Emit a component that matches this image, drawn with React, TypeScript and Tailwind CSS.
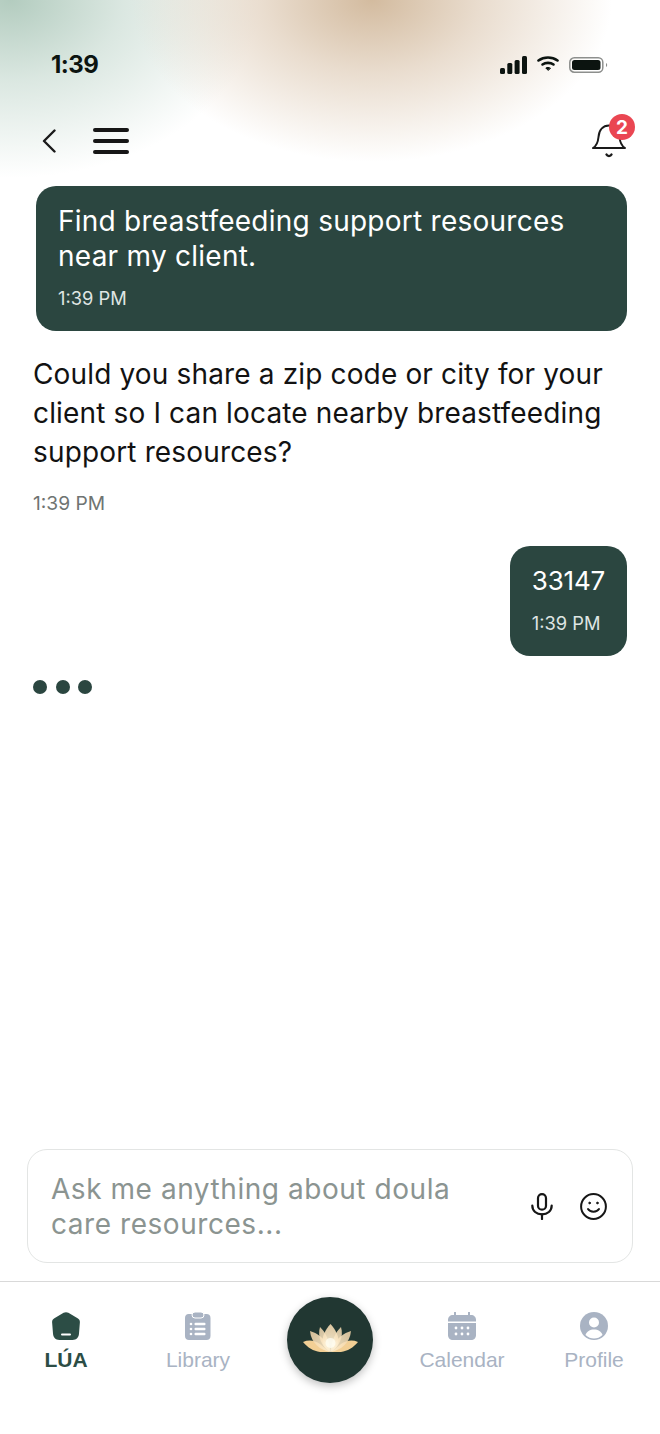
import React from 'react';

const LotusIcon = () => (
  <svg viewBox="0 0 55 28" className="h-[28px] w-[55px]">
    <defs>
      <radialGradient id="petal" gradientUnits="userSpaceOnUse" cx="27.5" cy="20" r="22">
        <stop offset="0%" stopColor="#fffbe9" />
        <stop offset="40%" stopColor="#fbe6c2" />
        <stop offset="100%" stopColor="#eed2a8" />
      </radialGradient>
    </defs>
    <path d="M0 18C6 15.5 12 16.5 17 20C20.5 23 24 26.5 27.5 28C16 29.5 7 26.5 0 18Z" fill="#f2cf95" />
    <path d="M55 18C49 15.5 43 16.5 38 20C34.5 23 31 26.5 27.5 28C39 29.5 48 26.5 55 18Z" fill="#f2cf95" />
    <path d="M7 7C14 9 21 14 25 22L27 28C17 26 8 19 7 7Z" fill="url(#petal)" opacity="0.88" />
    <path d="M48 7C41 9 34 14 30 22L28 28C38 26 47 19 48 7Z" fill="url(#petal)" opacity="0.88" />
    <path d="M17 3C22 8 26 14 27.5 28C19 23 14 13 17 3Z" fill="url(#petal)" opacity="0.85" />
    <path d="M38 3C33 8 29 14 27.5 28C36 23 41 13 38 3Z" fill="url(#petal)" opacity="0.85" />
    <path d="M27.5 0C33 6 35.5 12 35.5 17C35.5 22 32 25.5 27.5 28C23 25.5 19.5 22 19.5 17C19.5 12 22 6 27.5 0Z" fill="url(#petal)" opacity="0.9" />
    <circle cx="27.5" cy="19" r="5" fill="#fffdf0" opacity="0.8" />
  </svg>
);

const LuaIcon = () => (
  <svg viewBox="0 0 28 28" className="h-7 w-7">
    <path d="M11.6 0.8C13 -0.1 15 -0.1 16.4 0.8L25.6 6.3C27.1 7.2 28 8.6 27.9 10.3L27 21.6C26.7 25.5 24.5 28 20.6 28H7.4C3.5 28 1.3 25.5 1 21.6L0.1 10.3C0 8.6 0.9 7.2 2.4 6.3Z" fill="#2c4d45" />
    <rect x="9" y="21.5" width="10" height="2" rx="1" fill="#fff" />
  </svg>
);

const LibraryIcon = () => (
  <svg viewBox="0 0 26 28" className="h-7 w-[26px]">
    <path d="M3.5 2H21.5C24 2 25.5 3.5 25.5 6V24C25.5 26.5 24 28 21.5 28H4C1.5 28 0 26.5 0 24V6C0 3.5 1.5 2 3.5 2Z" fill="#a9b3c3" />
    <rect x="7" y="0" width="12" height="6" rx="3" fill="#a9b3c3" stroke="#fff" strokeWidth="1" />
    <g fill="#fff">
      <circle cx="6" cy="12" r="1.3" />
      <circle cx="6" cy="17" r="1.3" />
      <circle cx="6" cy="22" r="1.3" />
      <rect x="9.5" y="10.8" width="11" height="2.4" rx="1" />
      <rect x="9.5" y="15.8" width="11" height="2.4" rx="1" />
      <rect x="9.5" y="20.8" width="11" height="2.4" rx="1" />
    </g>
  </svg>
);

const CalendarIcon = () => (
  <svg viewBox="0 0 28 28" className="h-7 w-7">
    <path d="M7 0.5V4M21 0.5V4" stroke="#a9b3c3" strokeWidth="2" strokeLinecap="round" />
    <path d="M5 3H23C26 3 28 5 28 8V9.5H0V8C0 5 2 3 5 3Z" fill="#a9b3c3" />
    <path d="M0 11H28V23C28 26 26 28 23 28H5C2 28 0 26 0 23Z" fill="#a9b3c3" />
    <g fill="#fff">
      <circle cx="8" cy="16" r="1.4" />
      <circle cx="14" cy="16" r="1.4" />
      <circle cx="20" cy="16" r="1.4" />
      <circle cx="8" cy="22" r="1.4" />
      <circle cx="14" cy="22" r="1.4" />
      <circle cx="20" cy="22" r="1.4" />
    </g>
  </svg>
);

const ProfileIcon = () => (
  <svg viewBox="0 0 28 28" className="h-7 w-7">
    <circle cx="14" cy="14" r="14" fill="#a9b3c3" />
    <circle cx="14" cy="10.5" r="5" fill="#fff" />
    <path d="M5.5 23C6.5 19.5 10 17.5 14 17.5C18 17.5 21.5 19.5 22.5 23C20 25.5 17 26.5 14 26.5C11 26.5 8 25.5 5.5 23Z" fill="#fff" />
  </svg>
);

const TabItem = ({ icon, label, active }: { icon: React.ReactNode; label: string; active?: boolean }) => (
  <div className="flex flex-col items-center gap-[8px] pt-[30px]">
    {icon}
    <span className={`font-['Liberation_Sans',sans-serif] text-[21px] leading-[24px] ${active ? 'font-bold text-[#2c4d45]' : 'text-[#a9b3c3]'}`}>
      {label}
    </span>
  </div>
);

export default function App() {
  return (
    <div className="relative flex h-[1434px] w-[660px] flex-col overflow-hidden bg-white font-['Inter',sans-serif]">
      {/* Background blobs */}
      <div className="absolute top-0 left-0 h-[190px] w-[660px] bg-[radial-gradient(ellipse_250px_178px_at_10px_0px,#b3ccbf_0%,rgba(203,221,212,0.7)_45%,rgba(255,255,255,0)_100%)]"></div>
      <div className="absolute top-0 left-0 h-[190px] w-[660px] bg-[radial-gradient(ellipse_240px_162px_at_372px_0px,#d3bb9f_0%,rgba(226,209,190,0.75)_45%,rgba(255,255,255,0)_100%)]"></div>

      {/* Status bar */}
      <div className="relative z-10 flex h-[80px] items-end justify-between pr-[52px] pl-[51px]">
        <span className="text-[24px] leading-[30px] font-bold tracking-[-0.5px] text-[#0c1410]">1:39</span>
        <div className="flex items-start gap-[10px] pb-[6px]">
          <svg viewBox="0 0 27 18" className="h-[18px] w-[27px]" fill="#0c1410">
            <rect x="0" y="12" width="5" height="6" rx="1.5" />
            <rect x="7.3" y="7" width="5" height="11" rx="1.5" />
            <rect x="14.6" y="4" width="5" height="14" rx="1.5" />
            <rect x="22" y="0" width="5" height="18" rx="1.5" />
          </svg>
          <svg viewBox="0 0 22 15" className="h-[15px] w-[22px]" fill="none" stroke="#0c1410" strokeWidth="2.6" strokeLinecap="round">
            <path d="M1.5 4.5C7 0.5 15 0.5 20.5 4.5" />
            <path d="M5.5 8.5C8.5 6.3 13.5 6.3 16.5 8.5" />
            <path d="M11 14.2L8.8 12C10 11.2 12 11.2 13.2 12Z" fill="#0c1410" strokeWidth="1" />
          </svg>
          <svg viewBox="0 0 39 16" className="mt-[1px] h-[16px] w-[39px]">
            <rect x="0.8" y="0.8" width="33" height="14.4" rx="4.5" fill="none" stroke="#8d8f8d" strokeWidth="1.5" />
            <rect x="3" y="3" width="28.5" height="10" rx="2.5" fill="#0c1410" />
            <path d="M37 6C38.6 6.5 38.6 9.5 37 10Z" fill="#8d8f8d" />
          </svg>
        </div>
      </div>

      {/* Header */}
      <div className="relative z-10 mt-[31px] flex h-[60px] items-start justify-between pr-[34px] pl-[42px]">
        <div className="flex items-center gap-[37px] pt-[17px]">
          <svg viewBox="0 0 14 24" className="h-[24px] w-[14px]" fill="none" stroke="#1a1a1a" strokeWidth="2.4" strokeLinecap="round" strokeLinejoin="round">
            <path d="M12.5 1.5L2 12L12.5 22.5" />
          </svg>
          <div className="flex flex-col gap-[7px]">
            <div className="h-[4px] w-[36px] rounded-full bg-[#161616]"></div>
            <div className="h-[4px] w-[36px] rounded-full bg-[#161616]"></div>
            <div className="h-[4px] w-[36px] rounded-full bg-[#161616]"></div>
          </div>
        </div>
        <div className="relative mt-[13px] h-[34px] w-[34px]">
          <svg viewBox="0 0 34 34" className="h-[34px] w-[34px]" fill="none" stroke="#1a1a1a" strokeWidth="2" strokeLinecap="round" strokeLinejoin="round">
            <path d="M1 24H33C29.5 22 28 18 27.5 13C27 6 23 1.5 17 1.5C11 1.5 7 6 6.5 13C6 18 4.5 22 1 24Z" />
            <path d="M14.5 30.5C15.5 32.5 18.5 32.5 19.5 30.5" strokeWidth="2.4" />
          </svg>
          <div className="absolute -top-[10px] left-[17px] flex h-[26px] w-[26px] items-center justify-center rounded-full bg-[#ea4652] text-[19px] leading-none font-bold text-white">2</div>
        </div>
      </div>

      {/* Messages */}
      <div className="relative z-10 flex flex-1 flex-col px-[33px] pt-[15px]">
        <div className="ml-[3px] rounded-[20px] bg-[#2b4640] px-[22px] pt-[18px] pb-[21px] text-white">
          <p className="text-[28px] leading-[35px] tracking-[0.25px]">Find breastfeeding support resources<br />near my client.</p>
          <p className="mt-[12px] text-[18.3px] leading-[24px] text-[#dfe5e3]">1:39 PM</p>
        </div>

        <div className="mt-[24px]">
          <p className="text-[28px] leading-[39px] tracking-[0.15px] text-[#121212]">Could you share a zip code or city for your<br />client so I can locate nearby breastfeeding<br />support resources?</p>
          <p className="mt-[19px] text-[19.2px] leading-[24px] text-[#6f7472]">1:39 PM</p>
        </div>

        <div className="mt-[31px] self-end rounded-[20px] bg-[#2b4640] px-[22px] pt-[17px] pb-[21px] text-white">
          <p className="text-[26px] leading-[36px] tracking-[-0.2px]">33147</p>
          <p className="mt-[12px] text-[18.3px] leading-[24px] text-[#dfe5e3]">1:39 PM</p>
        </div>

        <div className="mt-[24px] flex gap-[8.5px]">
          <span className="h-[14px] w-[14px] rounded-full bg-[#2b4640]"></span>
          <span className="h-[14px] w-[14px] rounded-full bg-[#2b4640]"></span>
          <span className="h-[14px] w-[14px] rounded-full bg-[#2b4640]"></span>
        </div>
      </div>

      {/* Input */}
      <div className="relative z-10 px-[27px] pb-[18px]">
        <div className="flex h-[114px] items-center justify-between rounded-[20px] border border-[#e3e5e4] bg-white pr-[25px] pl-[23px]">
          <p className="pt-[1px] text-[28px] leading-[35px] tracking-[0.55px] text-[#8b9491]">Ask me anything about doula<br />care resources...</p>
          <div className="flex items-center gap-[27px]">
            <svg viewBox="0 0 22 27" className="h-[27px] w-[22px]" fill="none" stroke="#161616" strokeWidth="2.2" strokeLinecap="round">
              <rect x="7" y="1.2" width="8" height="15.5" rx="4" />
              <path d="M1.3 12.5C1.3 18 5.5 21.3 11 21.3C16.5 21.3 20.7 18 20.7 12.5" />
              <path d="M11 21.3V26" />
            </svg>
            <svg viewBox="0 0 27 27" className="h-[27px] w-[27px]" fill="none" stroke="#161616" strokeWidth="2" strokeLinecap="round">
              <circle cx="13.5" cy="13.5" r="12.4" />
              <path d="M8 16C10 19.5 17 19.5 19 16" />
              <circle cx="9.6" cy="10" r="0.9" fill="#161616" strokeWidth="0.8" />
              <circle cx="17.4" cy="10" r="0.9" fill="#161616" strokeWidth="0.8" />
            </svg>
          </div>
        </div>
      </div>

      {/* Tab bar */}
      <div className="relative z-10 grid h-[153px] grid-cols-5 border-t border-[#d9d9d9] bg-white">
        <TabItem icon={<LuaIcon />} label="LÚA" active />
        <TabItem icon={<LibraryIcon />} label="Library" />
        <div className="flex justify-center pt-[15px]">
          <div className="flex h-[86px] w-[86px] items-center justify-center rounded-full bg-[#213732] pb-[4px] shadow-[0_3px_8px_rgba(0,0,0,0.25)]">
            <LotusIcon />
          </div>
        </div>
        <TabItem icon={<CalendarIcon />} label="Calendar" />
        <TabItem icon={<ProfileIcon />} label="Profile" />
      </div>
    </div>
  );
}
